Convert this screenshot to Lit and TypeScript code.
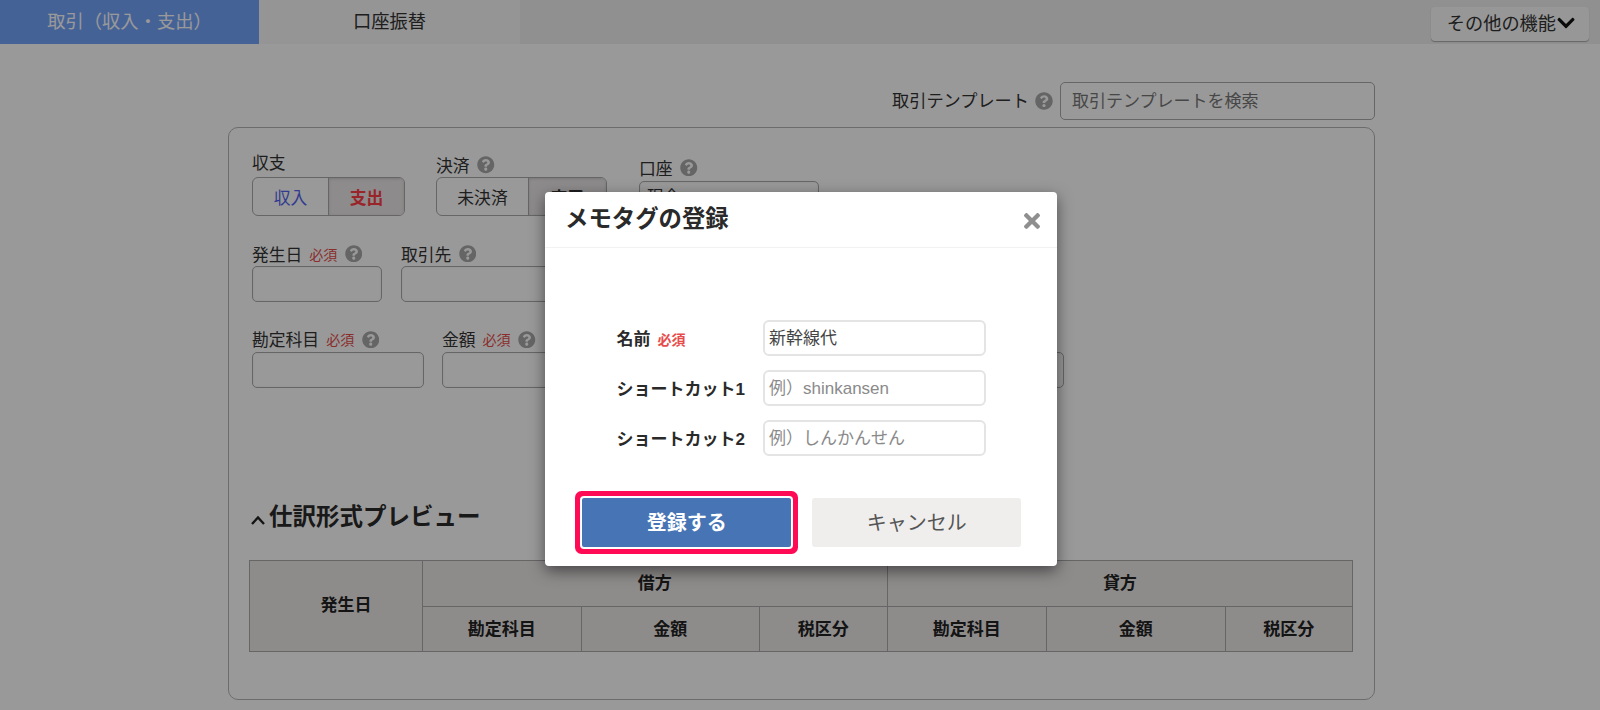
import { LitElement, html, css, svg } from "lit";
import { customElement } from "lit/decorators.js";

const help = html`<svg class="help" viewBox="0 0 512 512"><path d="M504 256c0 136.997-111.043 248-248 248S8 392.997 8 256C8 119.083 119.043 8 256 8s248 111.083 248 248zM262.655 90c-54.497 0-89.255 22.957-116.549 63.758-3.536 5.286-2.353 12.415 2.715 16.258l34.699 26.31c5.205 3.947 12.621 3.008 16.665-2.122 17.864-22.658 30.113-35.797 57.303-35.797 20.429 0 45.698 13.148 45.698 32.958 0 14.976-12.363 22.667-32.534 33.976C247.128 238.528 216 254.941 216 296v4c0 6.627 5.373 12 12 12h56c6.627 0 12-5.373 12-12v-1.333c0-28.462 83.186-29.647 83.186-106.667 0-58.002-60.165-102-116.531-102zM256 338c-25.365 0-46 20.635-46 46 0 25.364 20.635 46 46 46s46-20.636 46-46c0-25.365-20.635-46-46-46z"/></svg>`;
const req = html`<span class="req">必須</span>`;

@customElement("app-root")
export class AppRoot extends LitElement {
  static styles = css`
    :host { display: block; position: relative; width: 1600px; height: 710px; overflow: hidden; background: #fff; color: #333;
      font-family: "Liberation Sans", "Noto Sans CJK JP", sans-serif; }
    * { box-sizing: border-box; }
    .tabs { display: flex; height: 43.5px; background: #f0f0f0; align-items: flex-start; }
    .tab { width: 259px; height: 100%; display: flex; align-items: center; justify-content: center; font-size: 18.3px; padding-bottom: 4px; white-space: nowrap; }
    .tab.on { background: #74a4fc; color: #fff; }
    .tab.off { width: 261px; background: #f8f8f8; }
    .more { margin-left: auto; margin-right: 11px; margin-top: 7px; width: 158.5px; height: 33.5px; background: #fcfcfc; border-radius: 4px;
      box-shadow: 0 1px 1px rgba(0,0,0,.3); display: flex; align-items: center; justify-content: flex-end; padding: 0 13px 3px 0; font-size: 18.2px; color: #333; white-space: nowrap; }
    .more svg { width: 20px; height: 20px; fill: #111; display: block; margin-top: 2px; }
    .tmpl { display: flex; justify-content: flex-end; align-items: center; margin: 38.5px 225px 0 0; height: 38px; }
    .tmpl .lbl { font-size: 17.2px; padding-bottom: 3px; }
    .tmpl .help { margin: 0 7px 0 6px; width: 18px; height: 18px; }
    .tmpl .search { width: 315px; height: 38px; border: 1px solid #aaa; border-radius: 5px; display: flex; align-items: center; padding: 0 0 3px 11px; font-size: 17px; color: #777; }
    .help { width: 17.5px; height: 17.5px; fill: #a8a8a8; flex: none; display: block; }
    .box { margin: 7px 0 0 228px; width: 1147px; height: 572.5px; border: 1px solid #b5b5b5; border-radius: 10px; padding: 0 23px; }
    .row { display: flex; align-items: flex-end; }
    .row1 { padding-top: 24px; }
    .row2 { margin-top: 27.5px; gap: 19px; }
    .row3 { margin-top: 27.5px; gap: 18px; }
    .field { display: flex; flex-direction: column; }
    .label { display: flex; align-items: center; height: 20px; font-size: 16.8px; margin-bottom: 2.8px; white-space: nowrap; }
    .label .help { margin-left: 7.5px; }
    .label .req { margin-left: 7px; }
    .req { font-size: 14px; color: #e74c4c; }
    .input { height: 36px; border: 1px solid #aaa; border-radius: 5px; background: #fff; box-shadow: inset 0 0 2px rgba(0,0,0,.08); font-size: 16.5px; padding: 2px 7px; white-space: nowrap; overflow: hidden; }
    .row2 .input { height: 35.7px; }
    .seg { display: flex; height: 39px; border: 1px solid #aaa; border-radius: 6px; font-size: 16.8px; overflow: hidden; }
    .seg span { display: flex; align-items: center; justify-content: center; }
    .seg .active { background: #ece8e8; font-weight: 700; box-shadow: inset 0 1px 3px rgba(0,0,0,.15); border-left: 1px solid #aaa; }
    .seg-a { width: 153px; }
    .seg-b { width: 171px; }
    .income { width: 75px; color: #5264f0; }
    .expense { width: 76px; color: #ff3c46; }
    .unsettled { width: 91px; }
    .done { width: 78px; }
    .f-type { width: 184px; }
    .f-type .label { margin-bottom: 5px; }
    .f-pay { width: 203px; }
    .f-pay .label { margin-bottom: 2px; }
    .f-acct { width: 180px; margin-bottom: -0.5px; }
    .f-date { width: 130px; }
    .f-partner { width: 280px; }
    .f-title { width: 172px; }
    .f-amount { width: 180px; }
    .f-rest { width: 203.5px; margin-left: 220px; }
    .preview { display: flex; align-items: center; height: 30px; margin: 112px 0 0 -2px; font-size: 23.5px; font-weight: 700; color: #2a2a2a; white-space: nowrap; }
    .preview svg { width: 16px; height: 12px; margin-right: 3px; margin-top: 10px; fill: none; stroke: #222; stroke-width: 2.4; flex: none; }
    table { margin: 30px 0 0 -3px; width: 1103px; height: 90.6px; border-collapse: collapse; table-layout: fixed; }
    th { background: #ede8e8; border: 1px solid #aaa; font-size: 17px; font-weight: 700; color: #222; padding: 0 0 3px; height: 45.3px; }
    th.date { padding: 0 0 6px 20px; }
    .c1 { width: 173px; } .c2 { width: 158.5px; } .c3 { width: 178.5px; } .c4 { width: 127.7px; }
    .c5 { width: 159.3px; } .c6 { width: 178.5px; } .c7 { width: 127.5px; }
    .overlay { position: absolute; inset: 0; background: rgba(0,0,0,.4); }
    .modal { position: absolute; left: 545px; top: 192.3px; width: 512px; height: 374px; background: #fff; border-radius: 4px; box-shadow: 0 5px 15px rgba(0,0,0,.5); display: flex; flex-direction: column; }
    .head { display: flex; align-items: center; justify-content: space-between; height: 55.5px; border-bottom: 1px solid #f2f2f2; padding: 0 17px 0 20px; }
    .title { font-size: 23.4px; font-weight: 700; color: #2a2a2a; white-space: nowrap; padding-bottom: 5px; }
    .close { width: 16px; height: 24px; fill: #8f8f8f; margin-top: 2px; display: block; }
    .form { display: grid; grid-template-columns: 146px 223.5px; row-gap: 14.5px; margin: 72.5px 0 0 71.5px; align-items: center; }
    .name { font-size: 17px; font-weight: 700; color: #2a2a2a; white-space: nowrap; padding-bottom: 2px; }
    .name .req { margin-left: 7px; }
    .f { height: 35.5px; margin-left: .5px; border: 2px solid #e4e4e4; border-radius: 6px; display: flex; align-items: center; padding: 0 0 3px 4px; font-size: 17px; color: #444; white-space: nowrap; }
    .f.ph { color: #8a8a8a; }
    .actions { display: flex; gap: 21.3px; margin: 42.5px 0 0 37.3px; }
    .btn { height: 48.5px; display: flex; align-items: center; justify-content: center; border-radius: 3px; font-size: 20px; padding-bottom: 3px; }
    .save { width: 208.7px; background: #4674b5; color: #fff; font-weight: 700; box-shadow: 0 0 0 2px #fff, 0 0 0 7px #ff0a55; border-radius: 2px; }
    .cancel { width: 209px; background: #efeeed; color: #555; }
  `;

  render() {
    return html`
      <div class="tabs">
        <div class="tab on">取引（収入・支出）</div>
        <div class="tab off">口座振替</div>
        <div class="more">その他の機能<svg viewBox="0 0 448 512"><path d="M207.029 381.476L12.686 187.132c-9.373-9.373-9.373-24.569 0-33.941l22.667-22.667c9.357-9.357 24.522-9.375 33.901-.04L224 284.505l154.745-154.021c9.379-9.335 24.544-9.317 33.901.04l22.667 22.667c9.373 9.373 9.373 24.569 0 33.941L240.971 381.476c-9.373 9.372-24.569 9.372-33.942 0z"/></svg></div>
      </div>
      <div class="tmpl">
        <span class="lbl">取引テンプレート</span>${help}
        <div class="search">取引テンプレートを検索</div>
      </div>
      <div class="box">
        <div class="row row1">
          <div class="field f-type">
            <div class="label">収支</div>
            <div class="seg seg-a"><span class="income">収入</span><span class="active expense">支出</span></div>
          </div>
          <div class="field f-pay">
            <div class="label">決済${help}</div>
            <div class="seg seg-b"><span class="unsettled">未決済</span><span class="active done">完了</span></div>
          </div>
          <div class="field f-acct">
            <div class="label">口座${help}</div>
            <div class="input">現金</div>
          </div>
        </div>
        <div class="row row2">
          <div class="field f-date"><div class="label">発生日${req}${help}</div><div class="input"></div></div>
          <div class="field f-partner"><div class="label">取引先${help}</div><div class="input"></div></div>
        </div>
        <div class="row row3">
          <div class="field f-title"><div class="label">勘定科目${req}${help}</div><div class="input"></div></div>
          <div class="field f-amount"><div class="label">金額${req}${help}</div><div class="input"></div></div>
          <div class="field f-rest"><div class="label"></div><div class="input"></div></div>
        </div>
        <div class="preview"><svg viewBox="0 0 16 12">${svg`<path d="M2 10L8 3.5L14 10"/>`}</svg>仕訳形式プレビュー</div>
        <table>
          <colgroup><col class="c1"/><col class="c2"/><col class="c3"/><col class="c4"/><col class="c5"/><col class="c6"/><col class="c7"/></colgroup>
          <tr><th rowspan="2" class="date">発生日</th><th colspan="3">借方</th><th colspan="3">貸方</th></tr>
          <tr><th>勘定科目</th><th>金額</th><th>税区分</th><th>勘定科目</th><th>金額</th><th>税区分</th></tr>
        </table>
      </div>
      <div class="overlay"></div>
      <div class="modal">
        <div class="head">
          <div class="title">メモタグの登録</div>
          <svg class="close" viewBox="0 0 352 512"><path d="M242.72 256l100.07-100.07c12.28-12.28 12.28-32.19 0-44.48l-22.24-22.24c-12.28-12.28-32.19-12.28-44.48 0L176 189.28 75.93 89.21c-12.28-12.28-32.19-12.28-44.48 0L9.21 111.45c-12.28 12.28-12.28 32.19 0 44.48L109.28 256 9.21 356.07c-12.28 12.28-12.28 32.19 0 44.48l22.24 22.24c12.28 12.28 32.2 12.28 44.48 0L176 322.72l100.07 100.07c12.28 12.28 32.2 12.28 44.48 0l22.24-22.24c12.28-12.28 12.28-32.19 0-44.48L242.72 256z"/></svg>
        </div>
        <div class="form">
          <div class="name">名前${req}</div><div class="f">新幹線代</div>
          <div class="name">ショートカット1</div><div class="f ph">例）shinkansen</div>
          <div class="name">ショートカット2</div><div class="f ph">例）しんかんせん</div>
        </div>
        <div class="actions">
          <div class="btn save">登録する</div>
          <div class="btn cancel">キャンセル</div>
        </div>
      </div>
    `;
  }
}
